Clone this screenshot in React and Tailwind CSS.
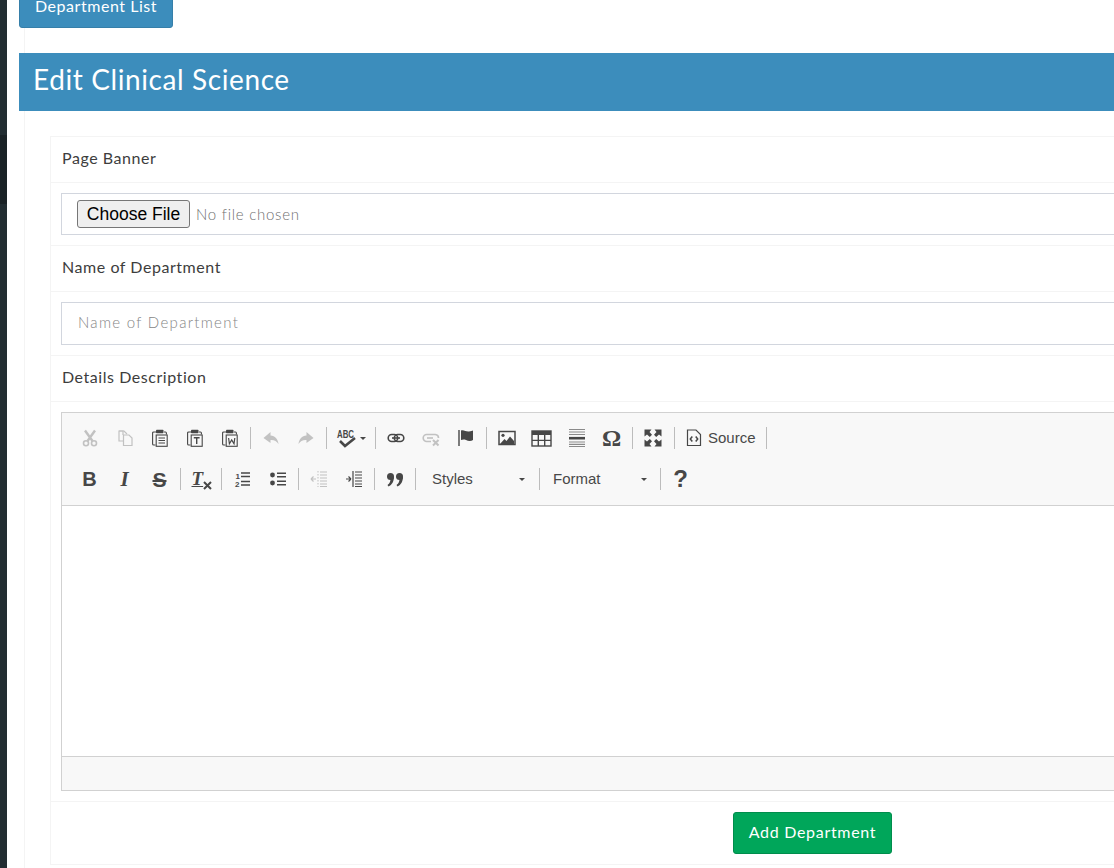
const S = "#474747";

const Svg = ({ children, w = 18, h = 18, vb, dim }) => (
  <svg width={w} height={h} viewBox={vb || `0 0 ${w} ${h}`} className={dim ? "opacity-30" : ""} fill="none">
    {children}
  </svg>
);

const Cut = () => (
  <Svg dim>
    <path d="M4 1.5 L11.5 12 M14 1.5 L6.5 12" stroke={S} strokeWidth="2.4" />
    <circle cx="5" cy="14.2" r="2.5" stroke={S} strokeWidth="1.6" />
    <circle cx="13" cy="14.2" r="2.5" stroke={S} strokeWidth="1.6" />
  </Svg>
);
const Copy = () => (
  <Svg dim>
    <path d="M7 6 V2 H3 V12 H7" stroke={S} strokeWidth="1.2" />
    <path d="M3 2 H8 L11 5" stroke={S} strokeWidth="1.2" />
    <path d="M7.5 6 H13 L16 9 V16.5 H7.5 Z" stroke={S} strokeWidth="1.2" />
  </Svg>
);
const PasteBase = ({ children }) => (
  <Svg>
    <path d="M5 3 H2.7 Q1.6 3 1.6 4 V15 Q1.6 16 2.7 16 H4.5" stroke={S} strokeWidth="1.1" />
    <path d="M13 3 H14.5 Q15.4 3 15.4 4 V5.5" stroke={S} strokeWidth="1.1" />
    <rect x="5" y="0.8" width="7.5" height="3.4" rx="0.8" fill={S} />
    <rect x="5.2" y="6" width="11" height="11.3" stroke={S} strokeWidth="1.1" />
    {children}
  </Svg>
);
const Paste = () => (
  <PasteBase>
    <path d="M7.5 9 H14 M7.5 11.5 H14 M7.5 14 H14" stroke={S} strokeWidth="1.1" />
  </PasteBase>
);
const PasteT = () => (
  <PasteBase>
    <path d="M7.8 8.8 H13.6 M10.7 8.8 V15" stroke={S} strokeWidth="1.4" />
  </PasteBase>
);
const PasteW = () => (
  <PasteBase>
    <path d="M7.6 9 L8.4 14.8 L10.7 11 L13 14.8 L13.8 9" stroke={S} strokeWidth="1.2" />
  </PasteBase>
);
const Undo = () => (
  <Svg dim>
    <path d="M8.5 3 L1.5 9 L8.5 14 V11 C12 10.6 14.5 12 16.5 15 C16 10 13 7 8.5 6.5 Z" fill={S} />
  </Svg>
);
const Redo = () => (
  <Svg dim>
    <path d="M9.5 3 L16.5 9 L9.5 14 V11 C6 10.6 3.5 12 1.5 15 C2 10 5 7 9.5 6.5 Z" fill={S} />
  </Svg>
);
const Spell = () => (
  <span className="flex items-center gap-[2px]">
    <svg width="22" height="22" viewBox="0 0 22 22" fill="none">
      <text x="1" y="10.5" fontFamily="Liberation Sans" fontSize="11" fontWeight="700" fill={S} textLength="17" lengthAdjust="spacingAndGlyphs">ABC</text>
      <path d="M4 14 L9 19 L19 11" stroke={S} strokeWidth="2.6" />
    </svg>
    <span className="w-0 h-0 border-x-[3px] border-x-transparent border-t-[3px] border-t-[#474747]" />
  </span>
);
const Link = () => (
  <Svg>
    <rect x="1.2" y="5.5" width="9.5" height="7" rx="3.5" stroke={S} strokeWidth="1.6" />
    <rect x="7.3" y="5.5" width="9.5" height="7" rx="3.5" stroke={S} strokeWidth="1.6" />
    <path d="M5 9 H13" stroke={S} strokeWidth="1.6" />
  </Svg>
);
const Unlink = () => (
  <Svg dim>
    <path d="M9 12.5 H4.7 A3.5 3.5 0 0 1 4.7 5.5 H13.3 A3.5 3.5 0 0 1 16.5 9" stroke={S} strokeWidth="1.6" />
    <path d="M5 9 H11" stroke={S} strokeWidth="1.6" />
    <path d="M11 11 L16.5 16.5 M16.5 11 L11 16.5" stroke={S} strokeWidth="2" />
  </Svg>
);
const Flag = () => (
  <Svg>
    <path d="M2 1 V17" stroke={S} strokeWidth="1.4" />
    <path d="M4 1.5 C7 0.5 9 3 12 2.5 C14 2.2 15 1.8 16 1.5 V11 C14 12.4 11 12 9 11 C7 10.2 5.5 10.5 4 11 Z" fill={S} />
  </Svg>
);
const Img = () => (
  <Svg>
    <rect x="1" y="2.5" width="16" height="13" stroke={S} strokeWidth="1.5" />
    <circle cx="5" cy="6.3" r="1.6" fill={S} />
    <path d="M2 15 L6.5 10 L8.5 12 L12 7.5 L16 12 V15 Z" fill={S} />
  </Svg>
);
const TableI = () => (
  <svg width="21" height="18" viewBox="0 0 21 18" fill="none">
    <rect x="1" y="2" width="19" height="15" stroke={S} strokeWidth="1.4" />
    <rect x="1" y="2" width="19" height="4" fill={S} />
    <path d="M7.3 6 V17 M13.7 6 V17 M1 11.4 H20" stroke={S} strokeWidth="1.4" />
  </svg>
);
const Hr = () => (
  <Svg>
    <path d="M1 0.5 H17 M1 3 H17 M1 5.5 H17 M1 13 H17 M1 15.3 H17 M1 17.5 H17" stroke="#8a8a8a" strokeWidth="1.2" />
    <path d="M1 9.2 H17" stroke={S} strokeWidth="2.6" />
  </Svg>
);
const Max = () => (
  <Svg>
    <path d="M0.5 0.5 H7.5 L5.5 3 L8 5.8 L5.8 8 L3 5.5 L0.5 7.5 Z" fill={S} />
    <path d="M17.5 0.5 H10.5 L12.5 3 L10 5.8 L12.2 8 L15 5.5 L17.5 7.5 Z" fill={S} />
    <path d="M0.5 17.5 H7.5 L5.5 15 L8 12.2 L5.8 10 L3 12.5 L0.5 10.5 Z" fill={S} />
    <path d="M17.5 17.5 H10.5 L12.5 15 L10 12.2 L12.2 10 L15 12.5 L17.5 10.5 Z" fill={S} />
  </Svg>
);
const SourceI = () => (
  <svg width="16" height="18" viewBox="0 0 16 18" fill="none">
    <path d="M1.5 1 H10 L14.5 5.5 V16.5 H1.5 Z" stroke={S} strokeWidth="1.2" />
    <path d="M6.3 7.5 L4.3 10 L6.3 12.5 M9.7 7.5 L11.7 10 L9.7 12.5" stroke={S} strokeWidth="1.5" />
  </svg>
);
const Ol = () => (
  <Svg>
    <text x="2.5" y="8.5" fontFamily="Liberation Sans" fontSize="8" fontWeight="700" fill={S}>1</text>
    <text x="2" y="17" fontFamily="Liberation Sans" fontSize="8" fontWeight="700" fill={S}>2</text>
    <path d="M8 3 H17 M8 6.5 H17 M8 11.5 H17 M8 15 H17" stroke={S} strokeWidth="1.5" />
  </Svg>
);
const Ul = () => (
  <Svg>
    <circle cx="3.5" cy="5" r="2.4" fill={S} />
    <circle cx="3.5" cy="13" r="2.4" fill={S} />
    <path d="M8 3.3 H17 M8 6.7 H17 M8 11.3 H17 M8 14.7 H17" stroke={S} strokeWidth="1.5" />
  </Svg>
);
const Outdent = () => (
  <Svg dim>
    <path d="M10 2 H17 M10 5 H17 M10 8 H17 M10 11 H17 M10 14 H17 M10 16.5 H17" stroke={S} strokeWidth="1" />
    <path d="M8 1 V17" stroke={S} strokeWidth="1" strokeDasharray="1.5 1.5" />
    <path d="M1 9 H6 M1 9 L3.5 6.5 M1 9 L3.5 11.5" stroke={S} strokeWidth="1.2" />
  </Svg>
);
const Indent = () => (
  <Svg>
    <path d="M10 2 H17 M10 5 H17 M10 8 H17 M10 11 H17 M10 14 H17 M10 16.5 H17" stroke={S} strokeWidth="1" />
    <path d="M8 1 V17" stroke={S} strokeWidth="1.2" />
    <path d="M1 9 H6 M6 9 L3.5 6.5 M6 9 L3.5 11.5" stroke={S} strokeWidth="1.2" />
  </Svg>
);
const Quote = () => (
  <Svg w={20} h={18}>
    <circle cx="5.5" cy="6.5" r="3.5" fill={S} />
    <path d="M9 6.5 C9 11 7.2 15 3.5 16.5 L2.5 15 C4.8 13.6 5.5 11 5.5 9 Z" fill={S} />
    <circle cx="14.5" cy="6.5" r="3.5" fill={S} />
    <path d="M18 6.5 C18 11 16.2 15 12.5 16.5 L11.5 15 C13.8 13.6 14.5 11 14.5 9 Z" fill={S} />
  </Svg>
);
const Glyph = ({ cls, children }) => (
  <span className={`leading-none text-[#474747] ${cls}`}>{children}</span>
);
const RemoveFormat = () => (
  <span className="relative flex w-[20px] h-[20px]">
    <Glyph cls="font-['Liberation_Serif'] font-bold italic text-[19px] pl-[1px] underline">T</Glyph>
    <svg width="9" height="9" viewBox="0 0 9 9" className="absolute right-[-1px] bottom-[-1px]" fill="none">
      <path d="M1 1 L8 8 M8 1 L1 8" stroke={S} strokeWidth="2" />
    </svg>
  </span>
);

const Btn = ({ children }) => (
  <span className="flex items-center justify-center w-[35px] h-[24px]">{children}</span>
);
const Sep = () => <span className="w-px h-[22px] ml-[3px] mr-[2px] bg-[#bcbcbc]" />;
const Arrow = () => (
  <span className="w-0 h-0 border-x-[3px] border-x-transparent border-t-[3px] border-t-[#474747]" />
);

const Label = ({ children }) => (
  <div className="h-[46px] flex items-center border-b border-[#f4f4f4] pl-[11px] pb-[4px] text-[16px] tracking-[0.55px] text-[#3d3d3d]">
    {children}
  </div>
);

export default function App() {
  return (
    <div className="h-[868px] w-[1114px] overflow-hidden bg-white flex font-['Lato',sans-serif]">
      <aside className="w-[7px] shrink-0 bg-[#222d32] flex flex-col">
        <div className="h-[135px] bg-[#222d32]" />
        <div className="h-[69px] bg-[#1a2226]" />
      </aside>
      <main className="w-[1400px] shrink-0 flex flex-col">
        <div className="ml-[12px] -mt-[15px]">
          <button className="w-[154px] h-[43px] pb-[2px] bg-[#3c8dbc] border border-[#367fa9] rounded-[3px] text-white text-[16px] tracking-[0.55px]">
            Department List
          </button>
        </div>
        <div className="ml-[17px] border-l border-[#f4f4f4] flex-1 flex flex-col">
          <h1 className="-ml-[6px] mt-[25px] h-[58px] bg-[#3c8dbc] flex items-center pl-[14px] pb-[7px] text-white text-[28px] tracking-[0.6px] font-normal">
            Edit Clinical Science
          </h1>
          <div className="ml-[25px] mt-[25px] border border-[#f4f4f4] flex flex-col">
            <Label>Page Banner</Label>
            <div className="h-[63px] border-b border-[#f4f4f4] pl-[10px] pt-[10px]">
              <div className="h-[42px] border border-[#d2d6de] flex items-center pl-[15px]">
                <button className="w-[113px] h-[28px] pt-[2px] bg-[#efefef] border border-[#767676] rounded-[3px] text-[17.5px] text-black font-['Liberation_Sans'] leading-none">
                  Choose File
                </button>
                <span className="ml-[6px] text-[15px] tracking-[0.75px] font-light text-[#6f6f6f]">No file chosen</span>
              </div>
            </div>
            <Label>Name of Department</Label>
            <div className="h-[64px] border-b border-[#f4f4f4] pl-[10px] pt-[10px]">
              <div className="h-[43px] border border-[#d2d6de] flex items-center pl-[16px] pb-[3px] text-[15px] tracking-[1.3px] font-light text-[#858585]">
                Name of Department
              </div>
            </div>
            <Label>Details Description</Label>
            <div className="h-[400px] border-b border-[#f4f4f4] pl-[10px] pt-[10px]">
              <div className="h-[379px] border border-[#d1d1d1] flex flex-col">
                <div className="h-[93px] bg-[#f8f8f8] border-b border-[#d1d1d1] pl-[10px] pt-[13px] flex flex-col gap-[17px]">
                  <div className="flex items-center h-[24px]">
                    <Btn><Cut /></Btn><Btn><Copy /></Btn><Btn><Paste /></Btn><Btn><PasteT /></Btn><Btn><PasteW /></Btn>
                    <Sep />
                    <Btn><Undo /></Btn><Btn><Redo /></Btn>
                    <Sep />
                    <span className="flex items-center justify-center w-[43px] h-[24px]"><Spell /></span>
                    <Sep />
                    <Btn><Link /></Btn><Btn><Unlink /></Btn><Btn><Flag /></Btn>
                    <Sep />
                    <Btn><Img /></Btn><Btn><TableI /></Btn><Btn><Hr /></Btn>
                    <Btn><Glyph cls="font-['Liberation_Serif'] font-bold text-[24px]">Ω</Glyph></Btn>
                    <Sep />
                    <span className="flex items-center justify-center w-[36px] h-[24px]"><Max /></span>
                    <Sep />
                    <span className="flex items-center gap-[6px] w-[86px] pl-[9px] text-[15px] text-[#484848] font-['Liberation_Sans']">
                      <SourceI />Source
                    </span>
                    <Sep />
                  </div>
                  <div className="flex items-center h-[24px]">
                    <Btn><Glyph cls="font-['Liberation_Sans'] font-bold text-[20px]">B</Glyph></Btn>
                    <Btn><Glyph cls="font-['Liberation_Serif'] font-bold italic text-[21px]">I</Glyph></Btn>
                    <Btn><Glyph cls="font-['Liberation_Sans'] font-bold text-[21px] line-through">S</Glyph></Btn>
                    <Sep />
                    <Btn><RemoveFormat /></Btn>
                    <Sep />
                    <span className="flex items-center justify-center w-[36px] h-[24px]"><Ol /></span>
                    <Btn><Ul /></Btn>
                    <Sep />
                    <Btn><Outdent /></Btn><Btn><Indent /></Btn>
                    <Sep />
                    <Btn><Quote /></Btn>
                    <Sep />
                    <span className="flex items-center justify-between w-[118px] pl-[14px] pr-[11px] text-[15px] text-[#484848] font-['Liberation_Sans'] h-[24px]">
                      Styles
                      <Arrow />
                    </span>
                    <Sep />
                    <span className="flex items-center justify-between w-[115px] pl-[11px] pr-[10px] text-[15px] text-[#484848] font-['Liberation_Sans'] h-[24px]">
                      Format
                      <Arrow />
                    </span>
                    <Sep />
                    <Btn><Glyph cls="font-['Liberation_Sans'] font-bold text-[24px]">?</Glyph></Btn>
                  </div>
                </div>
                <div className="flex-1 bg-white border-b border-[#d1d1d1]" />
                <div className="h-[33px] bg-[#f8f8f8]" />
              </div>
            </div>
            <div className="h-[62px] flex items-center pl-[682px]">
              <button className="w-[159px] h-[42px] pb-[3px] bg-[#00a65a] border border-[#008d4c] rounded-[3px] text-white text-[16px] tracking-[0.7px]">
                Add Department
              </button>
            </div>
          </div>
        </div>
      </main>
    </div>
  );
}
